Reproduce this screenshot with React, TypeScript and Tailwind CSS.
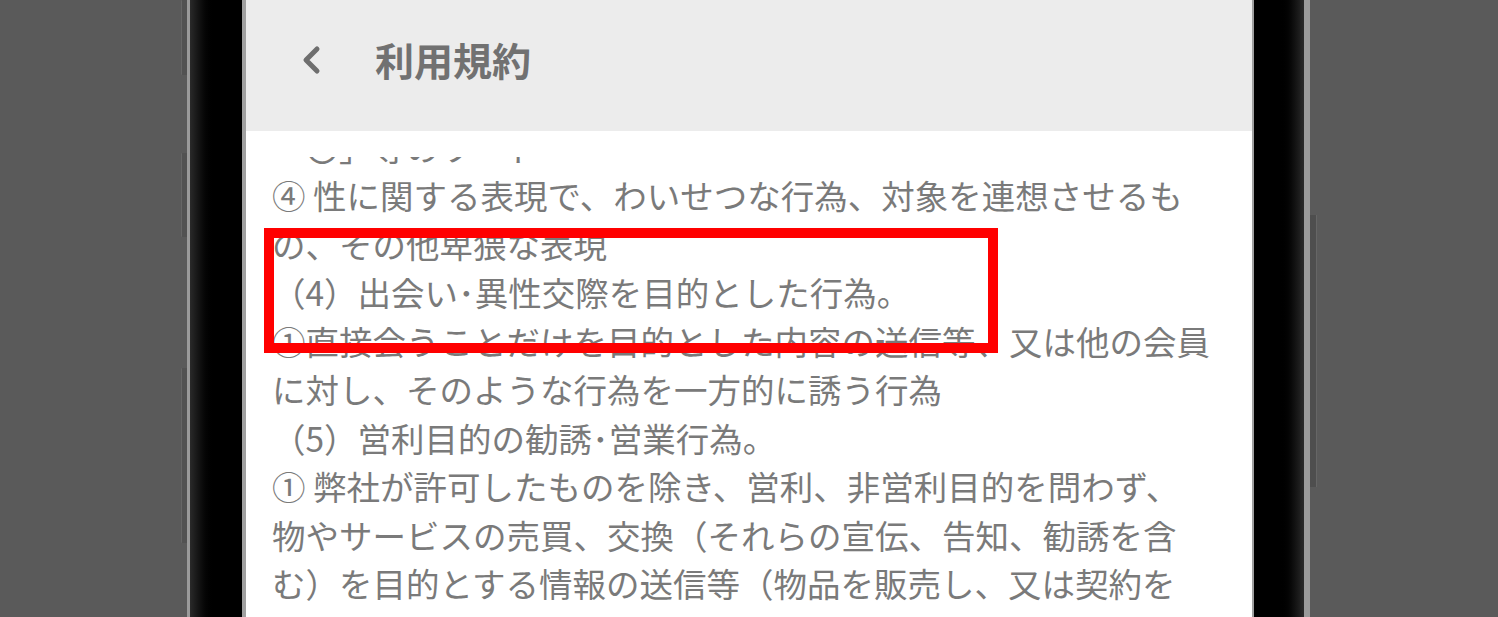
import React from 'react';

const lines = [
  '④ 性に関する表現で、わいせつな行為、対象を連想させるも',
  'の、その他卑猥な表現',
  '（4）出会い･異性交際を目的とした行為。',
  '①直接会うことだけを目的とした内容の送信等、又は他の会員',
  'に対し、そのような行為を一方的に誘う行為',
  '（5）営利目的の勧誘･営業行為。',
  '① 弊社が許可したものを除き、営利、非営利目的を問わず、',
  '物やサービスの売買、交換（それらの宣伝、告知、勧誘を含',
  'む）を目的とする情報の送信等（物品を販売し、又は契約を',
];

const SideButton: React.FC<{ top: number; height: number }> = ({ top, height }) => (
  <div
    className="w-[6px] bg-[#525252] border-l border-[#666666] rounded-l-[1px]"
    style={{ marginTop: top, height }}
  />
);

const App: React.FC = () => {
  return (
    <div className="w-[1498px] h-[617px] bg-[#5a5a5a] overflow-hidden flex pl-[181px]">
      {/* left side buttons */}
      <div className="flex flex-col w-[6px]">
        <SideButton top={0} height={75} />
        <SideButton top={78} height={84} />
        <SideButton top={131} height={175} />
      </div>

      {/* phone body */}
      <div className="flex h-full border-l-[3px] border-r-[6px] border-[#9a9a9a] bg-black">
        <div className="w-[52px] h-full bg-gradient-to-r from-[#2a2a2a] via-black to-black" />
        <div
          className="relative w-[1012px] h-full bg-white border-l-[4px] border-r-[2px] border-[#a0a0a0] flex flex-col"
          style={{ fontFamily: '"Noto Sans CJK JP", "Noto Sans", sans-serif' }}
        >
          <div className="h-[131px] shrink-0 bg-[#ececec] flex items-center pb-[12px]">
            <svg className="ml-[56px]" width="19" height="30" viewBox="0 0 19 30" fill="none">
              <polyline
                points="15,4 4,15 15,26"
                stroke="#6e6e6e"
                strokeWidth="5"
                strokeLinecap="round"
                strokeLinejoin="round"
              />
            </svg>
            <span className="ml-[54px] text-[39px] font-bold text-[#717171] leading-none">利用規約</span>
          </div>

          <div className="flex-1 overflow-hidden pl-[26px] pt-[26px] text-[33.5px] leading-[48.5px] text-[#7a7a7a] whitespace-nowrap">
            <div className="h-[14px] overflow-hidden flex flex-col justify-end">
              <div className="shrink-0">「〇」等のワード</div>
            </div>
            {lines.map((line, i) => (
              <div key={i}>{line}</div>
            ))}
          </div>

          {/* highlight box */}
          <div className="absolute left-[18px] top-[228px] w-[734px] h-[125px] border-[10px] border-[#ff0000]" />
        </div>
        <div className="w-[50px] h-full bg-gradient-to-l from-[#2a2a2a] via-black to-black" />
      </div>

      {/* right side button */}
      <div className="flex flex-col w-[7px]">
        <div className="mt-[215px] h-[272px] w-[7px] bg-[#4e4e4e] border-r border-[#666666]" />
      </div>
    </div>
  );
};

export default App;
